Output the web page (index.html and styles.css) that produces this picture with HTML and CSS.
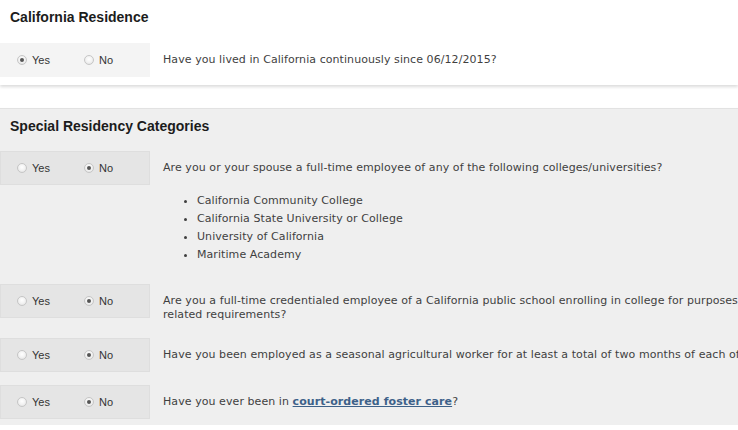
FILE: index.html
```html
<!DOCTYPE html>
<html lang="en">
<head>
    <meta charset="UTF-8">
    <title>Residency Questions</title>
    <link rel="stylesheet" href="styles.css">
</head>
<body>
    <div class="page">
        <div class="panel panel-white">
            <h2>California Residence</h2>
            <div class="row">
                <div class="choices">
                    <label class="opt"><span class="radio checked"></span>Yes</label>
                    <label class="opt"><span class="radio"></span>No</label>
                </div>
                <div class="question">Have you lived in California continuously since 06/12/2015?</div>
            </div>
        </div>

        <div class="panel panel-gray">
            <h2>Special Residency Categories</h2>
            <div class="row">
                <div class="choices">
                    <label class="opt"><span class="radio"></span>Yes</label>
                    <label class="opt"><span class="radio checked"></span>No</label>
                </div>
                <div class="question">
                    Are you or your spouse a full-time employee of any of the following colleges/universities?
                    <ul>
                        <li>California Community College</li>
                        <li>California State University or College</li>
                        <li>University of California</li>
                        <li>Maritime Academy</li>
                    </ul>
                </div>
            </div>
            <div class="row">
                <div class="choices">
                    <label class="opt"><span class="radio"></span>Yes</label>
                    <label class="opt"><span class="radio checked"></span>No</label>
                </div>
                <div class="question">Are you a full-time credentialed employee of a California public school enrolling in college for purposes<br>related requirements?</div>
            </div>
            <div class="row">
                <div class="choices">
                    <label class="opt"><span class="radio"></span>Yes</label>
                    <label class="opt"><span class="radio checked"></span>No</label>
                </div>
                <div class="question">Have you been employed as a seasonal agricultural worker for at least a total of two months of each of</div>
            </div>
            <div class="row">
                <div class="choices">
                    <label class="opt"><span class="radio"></span>Yes</label>
                    <label class="opt"><span class="radio checked"></span>No</label>
                </div>
                <div class="question">Have you ever been in <a href="#">court-ordered foster care</a>?</div>
            </div>
        </div>
    </div>
</body>
</html>
```

FILE: styles.css
```css
body {
    margin: 0;
    padding: 0;
    background-color: #fff;
    overflow: hidden;
}
.panel {
    padding: 8px 0 8px 0;
}
.panel-white {
    background-color: #fff;
    box-shadow: 0 2px 3px rgba(0, 0, 0, 0.14);
    margin-bottom: 23px;
}
.panel-gray {
    background-color: #efefef;
    border-top: 1px solid #e2e2e2;
    padding-bottom: 6px;
    box-shadow: 0 2px 3px rgba(0, 0, 0, 0.12);
}
h2 {
    font-family: "Liberation Sans", Arial, sans-serif;
    font-size: 14px;
    font-weight: bold;
    line-height: 18px;
    color: #1c1c1c;
    margin: 0 0 17px 10px;
}
.panel-gray h2 {
    margin-bottom: 16px;
}
.row {
    display: flex;
    align-items: flex-start;
    margin-bottom: 13px;
}
.row:last-child {
    margin-bottom: 0;
}
.choices {
    flex: none;
    width: 133px;
    height: 34px;
    padding-left: 17px;
    display: flex;
    align-items: center;
    background-color: #f4f4f4;
}
.panel-gray .choices {
    background-color: #e5e5e5;
    box-shadow: inset 0 0 0 1px #dedede;
}
.opt {
    display: inline-flex;
    align-items: center;
    font-family: "Liberation Sans", Arial, sans-serif;
    font-size: 11px;
    color: #333;
}
.opt:first-child {
    width: 67px;
}
.radio {
    width: 8px;
    height: 8px;
    border: 1px solid #c6c6c6;
    border-radius: 50%;
    background: radial-gradient(circle at 50% 40%, #fff 0%, #f2f2f2 50%, #dcdcdc 100%);
    margin-right: 5px;
    position: relative;
}
.radio.checked::after {
    content: "";
    position: absolute;
    left: 2px;
    top: 2px;
    width: 4px;
    height: 4px;
    border-radius: 50%;
    background-color: #555;
}
.question {
    flex: 1;
    min-width: 0;
    font-family: "DejaVu Sans", Verdana, sans-serif;
    font-size: 11px;
    letter-spacing: 0.07px;
    line-height: 14px;
    color: #3f3f3f;
    padding: 10px 0 3px 13px;
    white-space: nowrap;
}
.question ul {
    margin: 17px 0 4px 0;
    padding-left: 34px;
    line-height: 18px;
}
.question a {
    color: #3d6189;
    font-weight: bold;
    text-decoration: underline;
}
```
